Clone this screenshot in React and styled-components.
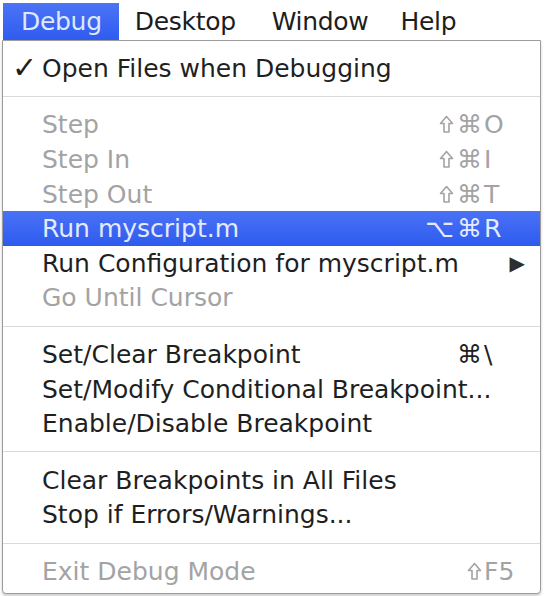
import React from 'react';
import styled, { createGlobalStyle } from 'styled-components';

const GlobalStyle = createGlobalStyle`
  html, body {
    margin: 0;
    padding: 0;
    background: #ffffff;
  }
  body {
    font-family: "DejaVu Sans", "Liberation Sans", sans-serif;
    -webkit-font-smoothing: antialiased;
  }
`;

const Screen = styled.div`
  width: 546px;
  height: 596px;
  overflow: hidden;
  background: #fff;
`;

const MenuBar = styled.div`
  display: flex;
  align-items: stretch;
  height: 37px;
  padding: 3px 0 0 3px;
`;

const MenuTitle = styled.div`
  display: flex;
  align-items: center;
  padding: 0 ${(p) => (p.$open ? 17 : 0)}px 0 ${(p) => p.$pad}px;
  font-size: 25px;
  letter-spacing: -0.3px;
  color: ${(p) => (p.$open ? '#dfe8ff' : '#1d1d1d')};
  background: ${(p) => (p.$open ? 'linear-gradient(#4c74f5, #2f5cf0)' : 'transparent')};
`;

const Menu = styled.div`
  width: 537px;
  margin-left: 2px;
  border: 1px solid #9c9c9c;
  border-radius: 0 0 4px 4px;
  padding: 10px 0 4px;
  background: #fff;
  box-shadow: 0 2px 3px rgba(0, 0, 0, 0.2);
`;

const Row = styled.div`
  display: grid;
  grid-template-columns: 39px 1fr auto;
  align-items: center;
  height: 34.6px;
  font-size: 25px;
  color: ${(p) => (p.$active ? '#e4ebff' : p.$disabled ? '#a3a3a3' : '#1f1f1f')};
  background: ${(p) => (p.$active ? 'linear-gradient(#4a72f5, #2e5bef)' : 'transparent')};
  white-space: nowrap;
`;

const Mark = styled.span`
  padding-left: 9px;
  font-size: 30px;
  line-height: 1;
`;

const Label = styled.span``;

const Shortcut = styled.span`
  display: flex;
  align-items: center;
  padding-right: 26px;
`;

const Mods = styled.span`
  display: flex;
  align-items: center;
  justify-content: flex-end;
  gap: 3px;
`;

const Key = styled.span`
  width: 30px;
  padding-left: 2px;
`;

const Arrow = styled.span`
  padding-right: 15px;
  font-size: 20px;
  color: #2e2e2e;
`;

const Separator = styled.div`
  height: 22px;
  display: flex;
  align-items: center;
  &::after {
    content: '';
    flex: 1;
    height: 1px;
    background: #dadada;
  }
`;

const ShiftIcon = () => (
  <svg width="15" height="19" viewBox="0 0 15 19" aria-hidden="true">
    <path
      d="M7.5 1.5 L13.5 8.5 H10 V17 H5 V8.5 H1.5 Z"
      fill="none"
      stroke="currentColor"
      strokeWidth="1.6"
      strokeLinejoin="round"
    />
  </svg>
);

const Mod = ({ sym }) => (sym === '⇧' ? <ShiftIcon /> : <span>{sym}</span>);

const groups = [
  [{ label: 'Open Files when Debugging', checked: true }],
  [
    { label: 'Step', mods: ['⇧', '⌘'], key: 'O', disabled: true },
    { label: 'Step In', mods: ['⇧', '⌘'], key: 'I', disabled: true },
    { label: 'Step Out', mods: ['⇧', '⌘'], key: 'T', disabled: true },
    { label: 'Run myscript.m', mods: ['⌥', '⌘'], key: 'R', active: true },
    { label: 'Run Configuration for myscript.m', submenu: true },
    { label: 'Go Until Cursor', disabled: true },
  ],
  [
    { label: 'Set/Clear Breakpoint', mods: ['⌘'], key: '\\' },
    { label: 'Set/Modify Conditional Breakpoint...' },
    { label: 'Enable/Disable Breakpoint' },
  ],
  [
    { label: 'Clear Breakpoints in All Files' },
    { label: 'Stop if Errors/Warnings...' },
  ],
  [{ label: 'Exit Debug Mode', mods: ['⇧'], key: 'F5', disabled: true }],
];

const MenuItem = ({ item }) => (
  <Row $active={item.active} $disabled={item.disabled}>
    <Mark>{item.checked ? '✓' : ''}</Mark>
    <Label>{item.label}</Label>
    {item.key && (
      <Shortcut>
        <Mods>
          {item.mods.map((m) => (
            <Mod key={m} sym={m} />
          ))}
        </Mods>
        <Key>{item.key}</Key>
      </Shortcut>
    )}
    {item.submenu && <Arrow>▶</Arrow>}
  </Row>
);

const App = () => (
  <Screen>
    <GlobalStyle />
    <MenuBar>
      <MenuTitle $open $pad={18}>Debug</MenuTitle>
      <MenuTitle $pad={16}>Desktop</MenuTitle>
      <MenuTitle $pad={36}>Window</MenuTitle>
      <MenuTitle $pad={32}>Help</MenuTitle>
    </MenuBar>
    <Menu>
      {groups.map((group, i) => (
        <React.Fragment key={i}>
          {i > 0 && <Separator />}
          {group.map((item) => (
            <MenuItem key={item.label} item={item} />
          ))}
        </React.Fragment>
      ))}
    </Menu>
  </Screen>
);

export default App;
